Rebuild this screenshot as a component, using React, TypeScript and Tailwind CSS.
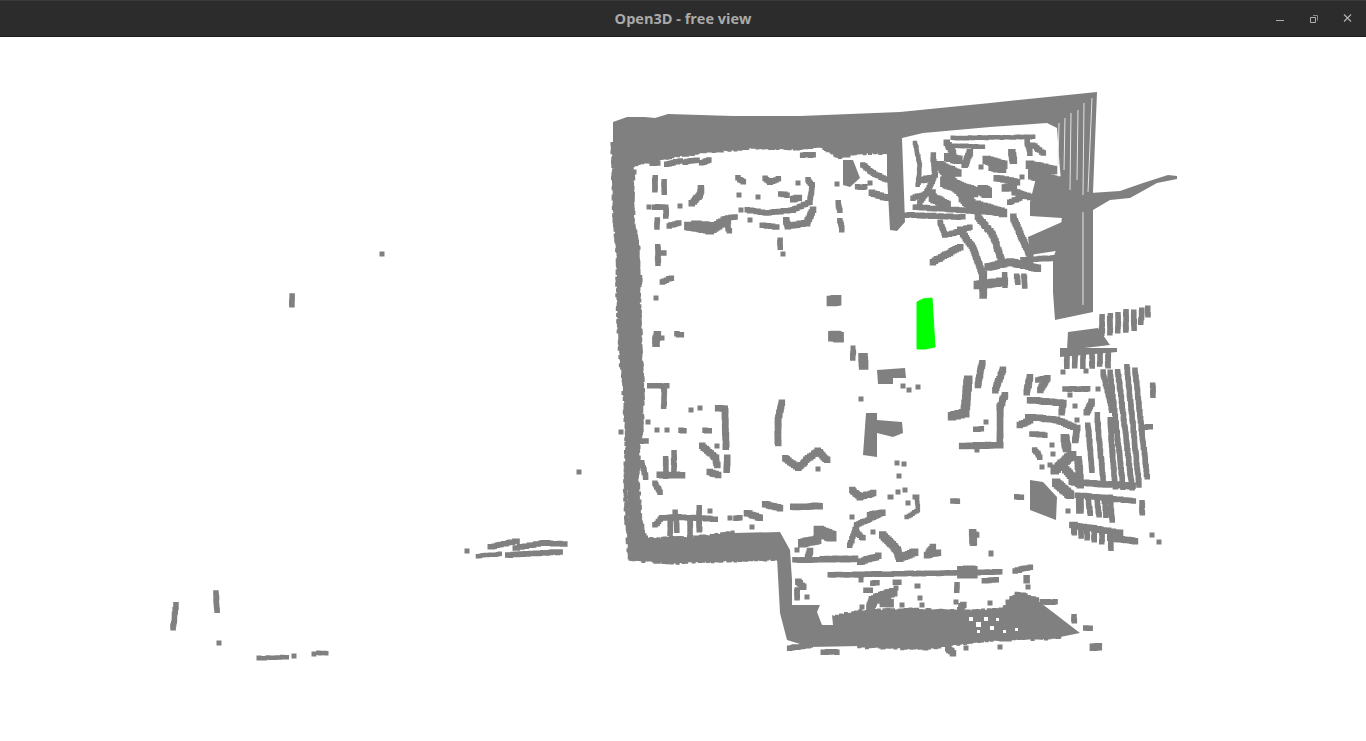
import React from 'react';

// point cloud, page coordinates (canvas starts at y = 37)
const GRAY = '#808080';

const solids: string[] = [
  // top + right + left wall
  '613,122 627,117 645,117 655,118 668,114 733,116 800,116 900,112 990,103 1097,92 1093,192 1093,312 1055,320 1053,292 1053,258 1060,240 1062,215 1062,190 1060,170 1057,128 1047,123 990,127 923,133 902,138 905,222 897,231 890,230 887,175 887,153 860,152 840,157 833,152 817,145 797,148 750,147 693,153 667,157 632,165 633,225 637,242 640,282 638,290 642,380 642,430 638,447 637,480 640,520 645,538 653,540 707,537 733,533 780,532 790,550 792,580 792,605 820,605 817,612 822,625 833,625 832,615 837,617 860,612 913,610 960,612 1003,610 1017,593 1037,600 1080,633 1060,637 980,640 927,648 860,646 810,647 787,640 780,613 777,558 720,560 670,562 630,559 627,480 625,493 627,447 625,397 620,347 618,290 618,252 615,218 613,145',
  // wedge + dense blob top right
  '1028,237 1062,222 1062,250 1030,255',
  '1036,178 1062,180 1062,218 1030,216 1030,202',
  // arm
  '1090,193 1120,191 1143,183 1168,175 1177,176 1177,179 1157,183 1130,198 1110,200 1093,210',
  // blocks
  '843,160 853,160 860,178 850,187 843,185',
  '877,370 905,368 906,378 893,378 893,384 878,384',
  '866,413 877,413 877,457 863,455',
  '877,420 902,422 903,433 893,437 877,433',
  '1068,332 1098,328 1110,345 1067,350',
  '1060,348 1117,348 1117,352 1060,357',
  '1030,480 1043,482 1057,497 1056,520 1030,510',
];

// wall faces that read as loose points, the outer top and right stay clean
const roughEdges: string[] = [
  '632,165 667,157 693,153 750,147 797,148 817,145 833,152 840,157 860,152 887,153',
  '632,165 633,225 637,242 640,282 638,290 642,380 642,430 638,447 637,480 640,520 645,538 653,540 707,537 733,533',
  '630,559 670,562 720,560 777,558',
  '613,145 615,218 618,252 618,290 620,347 625,397 627,447 625,493 627,520 630,559',
  '837,617 860,612 913,610 960,612 1003,610 1017,593 1037,600',
  '860,646 927,648 980,640 1060,637',
];

const strokes: [number, string][] = [
  // upper left room
  [5, '655,178 655,190'], [5, '664,182 664,192'], [5, '655,207 662,207'], [5, '666,207 666,216'],
  [5, '657,220 657,227'], [5, '669,226 679,223'], [5, '667,164 680,161'], [5, '685,162 697,160'],
  [5, '702,163 709,160'], [5, '652,163 658,163'], [6, '701,188 700,195 692,203'], [8, '688,226 710,230 727,220'],
  [5, '694,223 712,225'], [5, '728,218 735,217'], [5, '727,223 729,231'], [5, '738,178 743,182'],
  [5, '765,178 770,182 778,179'], [5, '747,210 767,213 793,210 810,202 812,185 808,180'], [5, '762,225 777,227'],
  [6, '786,220 788,226 807,223 813,210'], [6, '793,199 799,198'], [5, '780,240 780,247'], [5, '838,203 840,210'],
  [5, '840,221 842,230'], [5, '803,155 813,155'], [5, '858,187 865,187'], [5, '863,165 873,173 887,180'],
  [6, '872,193 887,198'], [5, '658,247 658,263'], [5, '662,253 664,253'], [5, '662,282 671,278'],
  [5, '781,194 787,195'],
  // middle left
  [7, '657,335 656,343'], [5, '677,334 681,335'], [5, '650,386 667,386'], [5, '664,387 664,406'],
  [6, '718,408 725,409 726,447'], [5, '681,430 684,431'], [5, '705,430 709,431'], [5, '641,441 646,441'],
  [6, '702,446 716,458 717,465'], [6, '727,458 727,470'], [5, '666,459 666,476'], [5, '674,453 674,470'],
  [6, '660,475 682,475'], [5, '642,463 646,477'], [5, '655,483 660,492'], [6, '710,472 718,475'],
  // centre
  [10, '832,301 836,300'], [10, '833,336 839,337'], [5, '853,352 853,358'], [9, '863,358 864,365'],
  [6, '782,403 778,420 778,443'], [6, '785,458 798,468 810,457 818,451 827,460'], [6, '852,490 860,497 873,493'],
  // lower left room
  [5, '655,525 662,518 677,517 715,519'], [5, '675,512 677,530'], [5, '699,508 699,530'], [5, '690,520 690,532'],
  [5, '670,520 670,533'], [5, '736,518 740,518'], [6, '747,513 760,518'], [6, '765,504 780,508'], [6, '793,507 820,506'],
  [4, '917,497 918,510 907,517'], [6, '870,515 882,513'], [5, '882,513 857,525 850,545'], [5, '857,533 863,538'],
  [10, '819,531 831,536'], [8, '802,543 817,540'], [6, '810,551 808,557'], [5, '795,560 817,560'], [6, '823,559 855,559'],
  [6, '860,562 878,556'], [7, '883,535 897,550 900,558 915,552'], [6, '933,547 927,555 938,553'], [7, '973,533 973,542'],
  [5, '830,575 1000,572'], [12, '963,572 971,572'], [5, '1030,567 1015,571'], [6, '1027,578 1027,580'],
  [5, '984,581 996,580'], [5, '957,585 957,590'], [5, '873,583 877,583'], [5, '895,582 899,582'], [5, '866,590 870,590'],
  [8, '893,592 873,600 870,610'], [8, '884,603 890,603'], [6, '798,582 803,587'], [5, '797,590 797,598'],
  [5, '790,648 810,645'], [5, '823,652 837,652'], [6, '963,605 960,610'], [5, '1042,602 1055,602'], [5, '1074,617 1074,621'],
  [6, '948,648 953,653'], [7, '1093,647 1098,647'], [5, '1086,628 1090,628'],
  // upper right room
  [4, '915,143 920,165 918,185'], [5, '933,155 935,175 927,192 920,202'], [5, '907,215 963,217'], [5, '915,207 1000,213'],
  [4, '953,138 1033,137'], [4, '947,145 983,147'], [8, '940,165 957,188 973,205 1000,212'], [5, '940,222 945,235 958,232 970,227'],
  [6, '933,262 960,247'], [6, '960,230 973,248 983,275'], [6, '978,217 993,235 1002,262'], [6, '1013,217 1022,238 1030,255'],
  [5, '1023,260 1055,258'], [7, '988,267 1010,262 1037,268'], [8, '978,285 1000,282'], [7, '983,275 983,295'],
  [5, '1005,275 1005,285'], [5, '1017,276 1018,282'], [5, '1024,276 1025,286'], [5, '913,198 933,192'],
  [6, '947,143 953,153'], [8, '948,157 958,160'], [7, '940,165 958,173'], [10, '945,182 973,192'], [8, '963,198 970,205'],
  [6, '970,152 965,165'], [8, '987,160 1003,165'], [6, '992,168 1003,170'], [7, '1012,153 1013,160'], [10, '983,190 987,193'],
  [6, '997,178 1017,182'], [7, '1005,188 1013,187'], [5, '1010,202 1020,198'], [5, '1027,142 1030,153'], [5, '1033,145 1043,153'],
  [8, '1030,165 1053,170'], [9, '1033,175 1060,182'], [8, '977,205 1003,213'], [6, '922,180 930,178'], [8, '933,198 947,205'],
  [6, '1040,190 1050,195'], [6, '1015,192 1030,197'],
  // right cluster
  [5, '1102,317 1102,333'], [5, '1110,316 1110,333'], [5, '1118,315 1118,331'], [5, '1126,312 1126,330'],
  [5, '1134,312 1134,328'], [5, '1142,310 1141,322'], [5, '1148,308 1148,315'], [5, '1067,354 1067,366'],
  [5, '1075,354 1075,366'], [5, '1083,354 1083,366'], [5, '1092,354 1092,366'], [5, '1100,352 1100,364'],
  [5, '1108,352 1108,366'], [6, '982,363 978,385'], [8, '968,380 965,413 952,416'], [6, '1003,370 995,390'],
  [6, '1005,395 1000,407 1000,445 962,446'], [5, '976,429 981,429'], [6, '1030,377 1027,392'], [6, '1047,378 1040,390'],
  [5, '1038,380 1047,378'], [5, '1065,389 1088,389'], [5, '1153,385 1153,395'], [6, '1030,400 1063,403 1062,412'],
  [6, '1092,402 1087,412'], [6, '1028,417 1057,420 1073,427'], [6, '1020,425 1030,420'], [5, '1032,434 1045,435'],
  [8, '1065,438 1067,448'], [5, '1035,450 1040,457'],
  [5, '1135,370 1147,477'], [5, '1127,367 1139,485'], [5, '1118,372 1132,488'], [5, '1110,372 1123,487'],
  [5, '1103,372 1112,410'], [5, '1110,420 1115,487'], [5, '1097,415 1103,480'], [5, '1088,425 1092,470'],
  [5, '1143,427 1150,427'], [6, '1072,482 1133,486'], [5, '1077,495 1133,501'], [7, '1080,497 1080,510'],
  [5, '1088,497 1090,513'], [5, '1097,497 1099,515'], [5, '1104,497 1106,515'], [5, '1110,497 1112,520'],
  [5, '1142,503 1142,513'], [6, '1077,428 1075,440'], [8, '1055,470 1072,455'], [8, '1056,483 1070,495'],
  [7, '1066,470 1080,485'], [7, '1078,460 1080,478'], [6, '1072,525 1120,533'], [5, '1074,527 1074,533'],
  [5, '1081,528 1081,536'], [5, '1087,529 1087,538'], [5, '1094,530 1094,540'], [5, '1102,532 1102,542'],
  [6, '1110,538 1135,541'], [5, '1111,540 1111,548'], [5, '972,532 977,535'], [5, '973,538 973,543'],
  [5, '953,501 957,501'], [5, '1017,497 1021,497'],
  // far points
  [5, '292,296 292,305'], [4, '478,556 500,554'], [5, '490,547 517,541'], [5, '515,548 543,543 565,544'],
  [5, '508,555 560,552'], [5, '176,605 173,628'], [5, '216,593 217,610'], [4, '263,658 287,657'], [4, '318,653 326,653'],
];

const dots: [number, number][] = [
  [634, 172], [649, 207], [680, 206], [739, 195], [758, 197], [741, 210], [750, 220], [798, 183], [783, 254],
  [837, 184], [870, 183], [656, 298], [662, 338], [691, 410], [700, 408], [648, 422], [621, 432], [657, 430],
  [667, 430], [717, 446], [853, 348], [903, 386], [909, 390], [918, 387], [861, 399], [818, 469], [897, 463],
  [904, 464], [899, 476], [898, 492], [905, 490], [891, 497], [915, 497], [710, 511], [700, 529], [730, 518],
  [752, 527], [890, 497], [898, 492], [908, 503], [852, 517], [873, 532], [797, 550], [991, 553], [1028, 587],
  [918, 586], [920, 598], [922, 605], [956, 602], [990, 603], [1008, 602], [1000, 647], [966, 648], [861, 580],
  [896, 588], [862, 607], [902, 605], [917, 586], [807, 597], [1063, 372], [1086, 371], [1070, 395], [1098, 389],
  [1075, 406], [1077, 420], [977, 450], [986, 422], [1052, 445], [1053, 454], [1042, 467], [1050, 465], [1068, 511],
  [1111, 548], [1152, 535], [1159, 542], [991, 554], [382, 254], [579, 472], [467, 551], [219, 643], [259, 658],
  [294, 656], [314, 654], [981, 167], [1022, 177],
];

// thin gaps in the right wall
const gaps: string[] = [
  '1084,103 1083,195', '1083,212 1083,305', '1092,98 1088,192', '1059,123 1058,165', '1065,118 1064,170',
  '1071,113 1070,190', '1078,110 1077,180',
];

const notches: [number, number, number][] = [
  [969, 617, 4], [976, 622, 5], [984, 617, 4], [990, 626, 4], [977, 630, 3], [996, 618, 3], [1003, 630, 3], [1015, 628, 3],
];

type Pt = [number, number];

const parse = (s: string): Pt[] => s.split(' ').map((p) => p.split(',').map(Number) as Pt);

const rnd = (a: number, b: number) => {
  const s = Math.sin(a * 12.9898 + b * 78.233) * 43758.5453;
  return s - Math.floor(s);
};

// the viewer draws every point as an axis-aligned square: walk the line and stamp squares
function stamp(pts: Pt[], size: number, jitter: number) {
  let d = '';
  for (let i = 0; i < pts.length - 1; i++) {
    const [x0, y0] = pts[i];
    const [x1, y1] = pts[i + 1];
    const n = Math.max(1, Math.ceil(Math.hypot(x1 - x0, y1 - y0) / 2.5));
    for (let k = 0; k <= n; k++) {
      const x = x0 + ((x1 - x0) * k) / n + (rnd(x0 + k, y0) - 0.5) * jitter * 2;
      const y = y0 + ((y1 - y0) * k) / n + (rnd(y0 + k, x1) - 0.5) * jitter * 2;
      d += `M${(x - size / 2).toFixed(1)} ${(y - size / 2).toFixed(1)}h${size}v${size}h${-size}z`;
    }
  }
  return d;
}

const cloud =
  roughEdges.map((s) => stamp(parse(s), 4, 1)).join('') +
  strokes.map(([w, s]) => stamp(parse(s), w + 0.5, 0.4)).join('') +
  dots.map(([x, y]) => `M${x - 2.5} ${y - 2.5}h5v5h-5z`).join('');

function TitleBar() {
  return (
    <div className="flex h-[37px] shrink-0 items-center border-t border-b border-t-[#3a3a3a] border-b-[#1d1d1d] bg-[#2c2c2c]">
      <div className="w-[106px]" />
      <div className="flex-1 text-center font-['Open_Sans',sans-serif] text-[14.5px] font-bold text-[#aaaaaa]">
        Open3D - free view
      </div>
      <div className="flex w-[106px] items-center">
        <svg width="106" height="35" viewBox="0 0 106 35" fill="none" stroke="#b0b0b0">
          <path d="M16 19.5h8" strokeWidth="1" />
          <path d="M50.5 16.5h5v5h-5z" strokeWidth="1" />
          <path d="M53 14.5h4.5v5" strokeWidth="1" stroke="#8a8a8a" />
          <path d="M84 13.5l7 7M91 13.5l-7 7" strokeWidth="1.2" />
        </svg>
      </div>
    </div>
  );
}

export default function App() {
  return (
    <div className="flex h-screen flex-col overflow-hidden bg-white">
      <TitleBar />
      <div className="min-h-0 flex-1">
        <svg className="block h-full w-full" viewBox="0 37 1366 704">
          <g fill={GRAY}>
            {solids.map((p, i) => (
              <polygon key={i} points={p} />
            ))}
            <path d={cloud} />
          </g>
          <g fill="none" stroke="#e4e4e4" strokeWidth="1">
            {gaps.map((p, i) => (
              <polyline key={i} points={p} />
            ))}
          </g>
          <g fill="#ffffff">
            {notches.map(([x, y, s], i) => (
              <rect key={i} x={x} y={y} width={s} height={s} />
            ))}
          </g>
          <polygon points="917,302 923,299 932,298 935,347 925,349 917,349" fill="#00ff00" stroke="#00ff00" strokeWidth="1" strokeLinejoin="round" />
        </svg>
      </div>
    </div>
  );
}
